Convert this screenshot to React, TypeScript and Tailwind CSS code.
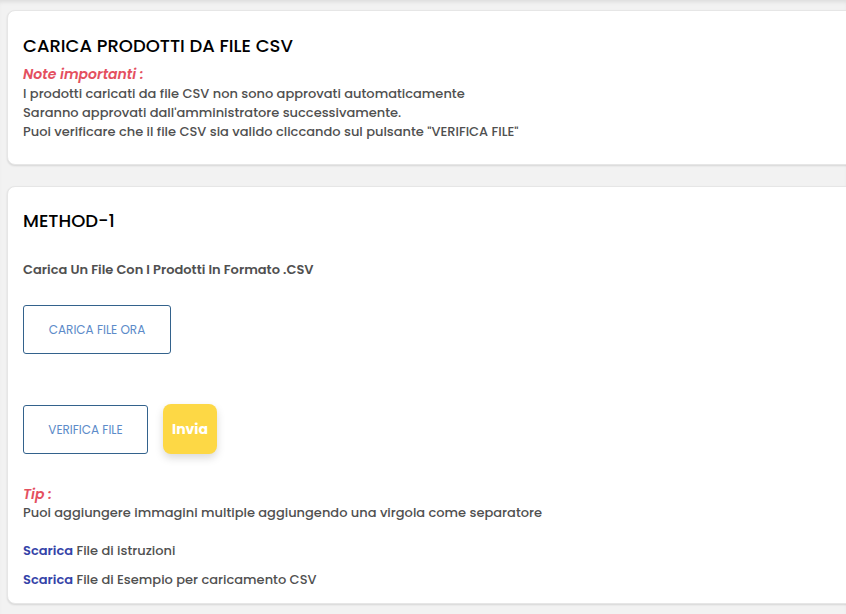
import React from 'react';

const font = { fontFamily: 'Poppins, "Open Sans", "Noto Sans", sans-serif' };

function Note({ label }: { label: string }) {
    return <p className="text-[14px] leading-[19px] italic font-semibold text-[#e4505f]">{label}</p>;
}

export default function App() {
    return (
        <div
            className="w-[846px] h-[614px] overflow-hidden bg-[#f2f2f2] pt-[10px] pl-[7px] shadow-[inset_0_4px_4px_-2px_rgba(0,0,0,0.09)]"
            style={font}
        >
            <div className="w-[860px] h-[155px] bg-white rounded-lg border border-[#e6e6e6] shadow-[0_1px_2px_rgba(0,0,0,0.12)] px-[15px] pt-[23px]">
                <h2 className="text-[18px] leading-[24px] font-medium text-black">CARICA PRODOTTI DA FILE CSV</h2>
                <div className="mt-[7px]">
                    <Note label="Note importanti :" />
                    <div className="text-[13px] leading-[19px] font-medium text-[#505050]">
                        <p>I prodotti caricati da file CSV non sono approvati automaticamente</p>
                        <p>Saranno approvati dall'amministratore successivamente.</p>
                        <p>Puoi verificare che il file CSV sia valido cliccando sul pulsante "VERIFICA FILE"</p>
                    </div>
                </div>
            </div>

            <div className="w-[860px] h-[418px] mt-[21px] bg-white rounded-lg border border-[#e6e6e6] shadow-[0_1px_2px_rgba(0,0,0,0.12)] px-[15px] pt-[22px]">
                <h2 className="text-[18px] leading-[24px] font-medium text-black">METHOD-1</h2>
                <p className="mt-[27px] text-[13px] leading-[19px] font-semibold text-[#505050]">
                    Carica Un File Con I Prodotti In Formato .CSV
                </p>
                <button className="mt-[26px] w-[148px] h-[49px] rounded-[3px] border border-[#33628c] text-[12px] text-[#5c8bc9] bg-white">
                    CARICA FILE ORA
                </button>
                <div className="mt-[51px] flex items-start gap-[15px]">
                    <button className="w-[125px] h-[49px] rounded-[3px] border border-[#33628c] text-[12px] text-[#5c8bc9] bg-white">
                        VERIFICA FILE
                    </button>
                    <button className="-mt-px w-[54px] h-[50px] rounded-[8px] bg-[#fdd845] text-white text-[14px] font-bold shadow-[0_4px_8px_rgba(0,0,0,0.15)]">
                        Invia
                    </button>
                </div>
                <div className="mt-[31px]">
                    <Note label="Tip :" />
                    <p className="text-[13px] leading-[17px] font-medium text-[#505050]">
                        Puoi aggiungere immagini multiple aggiungendo una virgola come separatore
                    </p>
                </div>
                <div className="mt-[20px] flex flex-col gap-[10px] text-[13px] leading-[19px] font-medium text-[#505050]">
                    <p><a className="font-semibold text-[#3443a8]">Scarica</a> File di istruzioni</p>
                    <p><a className="font-semibold text-[#3443a8]">Scarica</a> File di Esempio per caricamento CSV</p>
                </div>
            </div>
        </div>
    );
}
